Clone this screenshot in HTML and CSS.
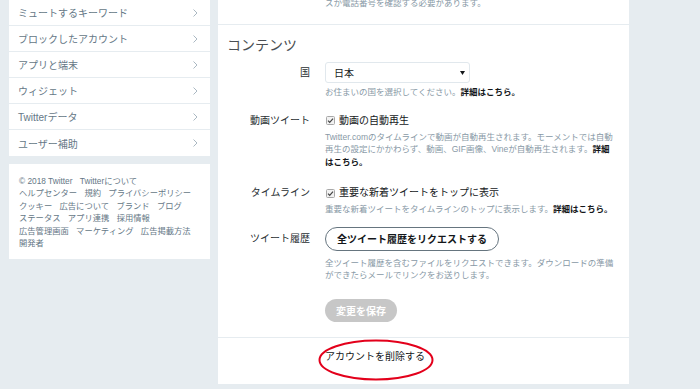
FILE: index.html
```html
<!DOCTYPE html>
<html lang="ja">
<head>
  <meta charset="UTF-8" />
  <meta name="viewport" content="width=device-width, initial-scale=1.0" />
  <title>設定</title>
  <link rel="stylesheet" href="styles.css">
</head>
<body>
  <div class="page">
    <aside class="sidebar">
      <ul class="menu">
        <li><a href="#">ミュートするキーワード</a><svg class="chev" width="5" height="8" viewBox="0 0 5 8"><polyline points="0.5,0.5 4,4 0.5,7.5" /></svg></li>
        <li><a href="#">ブロックしたアカウント</a><svg class="chev" width="5" height="8" viewBox="0 0 5 8"><polyline points="0.5,0.5 4,4 0.5,7.5" /></svg></li>
        <li><a href="#">アプリと端末</a><svg class="chev" width="5" height="8" viewBox="0 0 5 8"><polyline points="0.5,0.5 4,4 0.5,7.5" /></svg></li>
        <li><a href="#">ウィジェット</a><svg class="chev" width="5" height="8" viewBox="0 0 5 8"><polyline points="0.5,0.5 4,4 0.5,7.5" /></svg></li>
        <li><a href="#">Twitterデータ</a><svg class="chev" width="5" height="8" viewBox="0 0 5 8"><polyline points="0.5,0.5 4,4 0.5,7.5" /></svg></li>
        <li><a href="#">ユーザー補助</a><svg class="chev" width="5" height="8" viewBox="0 0 5 8"><polyline points="0.5,0.5 4,4 0.5,7.5" /></svg></li>
      </ul>
      <nav class="footer">
        <span>© 2018 Twitter</span>
        <a href="#">Twitterについて</a>
        <a href="#">ヘルプセンター</a>
        <a href="#">規約</a>
        <a href="#">プライバシーポリシー</a>
        <a href="#">クッキー</a>
        <a href="#">広告について</a>
        <a href="#">ブランド</a>
        <a href="#">ブログ</a>
        <a href="#">ステータス</a>
        <a href="#">アプリ連携</a>
        <a href="#">採用情報</a>
        <a href="#">広告管理画面</a>
        <a href="#">マーケティング</a>
        <a href="#">広告掲載方法</a>
        <a href="#">開発者</a>
      </nav>
    </aside>

    <main class="panel">
      <section class="prev">
        <p class="hint">スか電話番号を確認する必要があります。</p>
      </section>

      <section class="content">
        <h2>コンテンツ</h2>

        <div class="row row-country">
          <div class="label">国</div>
          <div class="field">
            <div class="select">
              <span>日本</span>
              <svg width="5" height="4" viewBox="0 0 5 4"><polygon points="0,0 5,0 2.5,4" /></svg>
            </div>
            <p class="hint">お住まいの国を選択してください。<a href="#">詳細はこちら。</a></p>
          </div>
        </div>

        <div class="row row-video">
          <div class="label">動画ツイート</div>
          <div class="field">
            <label class="check">
              <svg width="9" height="9" viewBox="0 0 9 9"><rect x="0.5" y="0.5" width="8" height="8" rx="1" /><polyline points="2,4.6 3.7,6.3 7,2.6" /></svg>
              動画の自動再生
            </label>
            <p class="hint">Twitter.comのタイムラインで動画が自動再生されます。モーメントでは自動再生の設定にかかわらず、動画、GIF画像、Vineが自動再生されます。<a href="#">詳細はこちら。</a></p>
          </div>
        </div>

        <div class="row row-timeline">
          <div class="label">タイムライン</div>
          <div class="field">
            <label class="check">
              <svg width="9" height="9" viewBox="0 0 9 9"><rect x="0.5" y="0.5" width="8" height="8" rx="1" /><polyline points="2,4.6 3.7,6.3 7,2.6" /></svg>
              重要な新着ツイートをトップに表示
            </label>
            <p class="hint">重要な新着ツイートをタイムラインのトップに表示します。<a href="#">詳細はこちら。</a></p>
          </div>
        </div>

        <div class="row row-archive">
          <div class="label">ツイート履歴</div>
          <div class="field">
            <button class="btn-outline">全ツイート履歴をリクエストする</button>
            <p class="hint">全ツイート履歴を含むファイルをリクエストできます。ダウンロードの準備ができたらメールでリンクをお送りします。</p>
          </div>
        </div>

        <div class="row row-save">
          <div class="label"></div>
          <div class="field">
            <button class="btn-save" disabled>変更を保存</button>
          </div>
        </div>
      </section>

      <section class="delete">
        <a href="#">アカウントを削除する</a>
        <svg class="circle" width="116" height="42" viewBox="0 0 116 42"><ellipse cx="58" cy="21" rx="56.5" ry="19.5" /></svg>
      </section>
    </main>
  </div>
</body>
</html>
```

FILE: styles.css
```css
body {
  margin: 0;
  background: #e6ecf0;
  font-family: "Liberation Sans", "Noto Sans CJK JP", sans-serif;
  color: #14171a;
}
a {
  color: inherit;
  text-decoration: none;
}
.page {
  display: flex;
  align-items: flex-start;
  gap: 8px;
  padding-left: 9px;
}

/* sidebar */
.sidebar {
  width: 201px;
  flex: none;
}
.menu {
  list-style: none;
  margin: 0;
  padding: 0;
  background: #fff;
}
.menu li {
  display: flex;
  align-items: center;
  justify-content: space-between;
  height: 25px;
  padding: 0 12px 0 9px;
  border-bottom: 1px solid #e6ecf0;
  font-size: 10px;
  color: #657786;
}
.menu li:last-child {
  border-bottom: 0;
  height: 26px;
}
.chev polyline {
  fill: none;
  stroke: #aab8c2;
  stroke-width: 1;
}
.footer {
  margin-top: 8px;
  background: #fff;
  padding: 11px 6px 10px 10px;
  font-size: 8.3px;
  line-height: 12.4px;
  color: #657786;
}
.footer a,
.footer span {
  display: inline-block;
  white-space: nowrap;
  margin-right: 5px;
}

/* main panel */
.panel {
  width: 411px;
  background: #fff;
  flex: none;
}
.hint {
  margin: 0;
  font-size: 8.5px;
  line-height: 12.5px;
  color: #8899a6;
}
.hint a {
  color: #14171a;
  font-weight: bold;
}
.prev {
  height: 24px;
  border-bottom: 1px solid #e6ecf0;
  padding-left: 107px;
  overflow: hidden;
}
.prev .hint {
  margin-top: -3px;
}
.content {
  padding: 8px 0 15px 9px;
  border-bottom: 1px solid #e6ecf0;
}
.content h2 {
  margin: 0;
  font-size: 14px;
  line-height: 24px;
  font-weight: normal;
  color: #4a4f54;
}
.row {
  display: flex;
}
.label {
  width: 98px;
  flex: none;
  box-sizing: border-box;
  padding-right: 15px;
  text-align: right;
  font-size: 10px;
  line-height: 14px;
  color: #292f33;
}
.field {
  width: 290px;
}
.row-country {
  margin-top: 5px;
}
.row-country .label {
  line-height: 21px;
}
.row-video {
  margin-top: 15px;
}
.row-timeline {
  margin-top: 18px;
}
.row-archive {
  margin-top: 11px;
}
.row-archive .label {
  line-height: 24px;
}
.row-save {
  margin-top: 17px;
}
.select {
  display: flex;
  align-items: center;
  justify-content: space-between;
  width: 145px;
  height: 21px;
  box-sizing: border-box;
  padding: 0 4px 0 8px;
  border: 1px solid #e1e8ed;
  border-radius: 3px;
  font-size: 10px;
}
.select svg polygon {
  fill: #14171a;
}
.row-country .hint {
  margin-top: 3px;
}
.check {
  display: flex;
  align-items: center;
  gap: 4px;
  font-size: 10px;
  line-height: 14px;
  padding-left: 1px;
}
.check rect {
  fill: #f2f2f2;
  stroke: #a8a8a8;
}
.check polyline {
  fill: none;
  stroke: #444;
  stroke-width: 1.2;
}
.check + .hint {
  margin-top: 3px;
}
.btn-outline {
  height: 24px;
  padding: 0 11px;
  border: 1px solid #66757f;
  border-radius: 12px;
  background: #fff;
  font-family: inherit;
  font-size: 10px;
  font-weight: bold;
  color: #14171a;
}
.btn-outline + .hint {
  margin-top: 6px;
}
.btn-save {
  width: 72px;
  height: 23px;
  border: 0;
  border-radius: 12px;
  background: #c7c7c7;
  color: #fff;
  font-family: inherit;
  font-size: 10px;
  font-weight: bold;
}
.delete {
  position: relative;
  height: 46px;
  padding-left: 107px;
  font-size: 10px;
  line-height: 14px;
}
.delete a {
  display: block;
  padding-top: 12px;
}
.circle {
  position: absolute;
  left: 100px;
  top: 1px;
}
.circle ellipse {
  fill: none;
  stroke: #e3001b;
  stroke-width: 2;
}
```
